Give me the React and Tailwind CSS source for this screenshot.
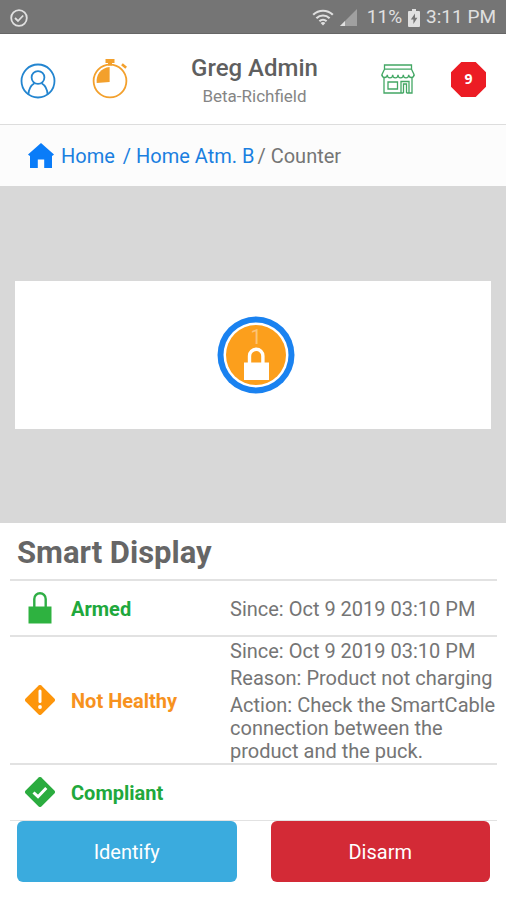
const statusColors = {
  good: 'text-[#20a83c]',
  warning: 'text-[#f7921e]',
}

const statuses = [
  { label: 'Armed', tone: 'good', Icon: ArmedIcon, details: ['Since: Oct 9 2019 03:10 PM'] },
  {
    label: 'Not Healthy',
    tone: 'warning',
    Icon: WarningIcon,
    details: [
      'Since: Oct 9 2019 03:10 PM',
      'Reason: Product not charging',
      'Action: Check the SmartCable connection between the product and the puck.',
    ],
  },
  { label: 'Compliant', tone: 'good', Icon: CompliantIcon, details: [] },
]

function StatusBar() {
  return (
    <div className="flex h-[34px] items-center justify-between border-b border-[#666] bg-[#757575] px-2.5 pt-0.5 text-[19px] text-[#e0e0e0]">
      <svg viewBox="0 0 18 18" className="size-[18px]" fill="none" stroke="currentColor" strokeWidth="1.8">
        <circle cx="9" cy="9" r="7.8" />
        <path d="M5 9l3 3 5.2-5.5" />
      </svg>
      <div className="flex items-center">
        <svg viewBox="0 0 22 17" className="mr-1.5 h-[17px] w-[22px]" fill="none" stroke="currentColor" strokeWidth="2.2">
          <path d="M1.2 5.8C6.8.4 15.2.4 20.8 5.8" />
          <path d="M4.4 9.2c3.8-3.6 9.4-3.6 13.2 0" />
          <path d="M7.4 12.3c2.1-1.9 5.1-1.9 7.2 0" />
          <path d="M11 16.5l-2.4-2.6c1.4-1.2 3.4-1.2 4.8 0z" fill="currentColor" stroke="none" />
        </svg>
        <svg viewBox="0 0 17 17" className="mr-2.5 size-[17px]" fill="currentColor">
          <path d="M17 0v17H0z" opacity=".4" />
          <path d="M5 12v5H0z" />
        </svg>
        <span>11%</span>
        <svg viewBox="0 0 12 18" className="mx-1.5 h-[18px] w-3">
          <path d="M4 0h4v2h3a1 1 0 0 1 1 1v14a1 1 0 0 1-1 1H1a1 1 0 0 1-1-1V3a1 1 0 0 1 1-1h3z" fill="currentColor" />
          <path d="M7 4.5L2.8 10.6h2.6V15l4-6.2H7z" fill="#757575" />
        </svg>
        <span>3:11 PM</span>
      </div>
    </div>
  )
}

function UserIcon() {
  return (
    <svg viewBox="0 0 36 36" className="size-9" fill="none" stroke="#2385d0" strokeWidth="1.8">
      <circle cx="18" cy="18" r="16.5" />
      <circle cx="18" cy="14.5" r="6.4" />
      <path d="M8.4 31.4c.4-6.2 3-9.4 6-11.2M27.6 31.4c-.4-6.2-3-9.4-6-11.2" />
    </svg>
  )
}

function TimerIcon() {
  return (
    <svg viewBox="0 0 36 40" className="h-10 w-9" fill="#f3a02c">
      <circle cx="18" cy="22" r="16.4" fill="none" stroke="#f3a02c" strokeWidth="1.8" />
      <path d="M13.5 0h9v4h-9zM16 4h4v2.5h-4zM30.8 4.2l4.2 3.6-1.7 2-4.2-3.6z" />
      <path d="M17.6 8v15L4.7 24C3.7 16 9 8.6 17.6 8z" />
    </svg>
  )
}

function StoreIcon() {
  return (
    <svg viewBox="0 0 34 30" className="h-[30px] w-[34px]" fill="none" stroke="#43a764" strokeWidth="1.3">
      <path d="M3.5 1h27v4.2h-27zM3.5 5.2L1 10.5v1.3M30.5 5.2l2.5 5.3v1.3" />
      <path d="M1 10.8c0 3.6 5.3 3.6 5.3 0 0 4.2 5.4 4.2 5.4 0 0 4.2 5.3 4.2 5.3 0 0 4.2 5.3 4.2 5.3 0 0 4.2 5.4 4.2 5.4 0 0 3.6 5.3 3.6 5.3 0" />
      <path d="M3 14v15h17V17.5h8V29h3V14M22.5 29V20h3v9M20 29h2.5M25.5 29H28" />
      <path d="M7 18h9.5v7H7z" />
    </svg>
  )
}

function HomeIcon() {
  return (
    <svg viewBox="0 0 26 25" className="h-[25px] w-[26px]" fill="#0a7cf8">
      <path d="M13 0l13 11.5-1.4 1.3H24V25h-7.8v-8.5H9.8V25H2V12.8h-.6L0 11.5z" />
    </svg>
  )
}

function ArmedIcon() {
  return (
    <svg viewBox="0 0 30 32" className="h-8 w-[30px]">
      <path d="M9.3 15V7a5.7 5.7 0 0 1 11.4 0v8" fill="none" stroke="#2fae45" strokeWidth="2.4" />
      <path d="M3.5 14.5h23v17h-23z" fill="#2eb240" />
    </svg>
  )
}

function WarningIcon() {
  return (
    <svg viewBox="0 0 30 30" className="size-[30px]">
      <path d="M13.6.6a2 2 0 0 1 2.8 0l13 13a2 2 0 0 1 0 2.8l-13 13a2 2 0 0 1-2.8 0l-13-13a2 2 0 0 1 0-2.8z" fill="#fd950b" />
      <path d="M15 6v10.5" stroke="#fff" strokeWidth="3" strokeLinecap="round" />
      <circle cx="15" cy="22" r="1.9" fill="#fff" />
    </svg>
  )
}

function CompliantIcon() {
  return (
    <svg viewBox="0 0 30 30" className="size-[30px]">
      <path d="M13.6.6a2 2 0 0 1 2.8 0l13 13a2 2 0 0 1 0 2.8l-13 13a2 2 0 0 1-2.8 0l-13-13a2 2 0 0 1 0-2.8z" fill="#2bac3f" />
      <path d="M8.5 15.500l4.500 4.200 8.300-8.700" fill="none" stroke="#fff" strokeWidth="3" />
    </svg>
  )
}

function Header() {
  return (
    <header className="flex h-[91px] items-center justify-between border-b border-[#ddd] px-5">
      <div className="flex items-center gap-9">
        <button aria-label="Profile" className="pt-1">
          <UserIcon />
        </button>
        <button aria-label="Timer">
          <TimerIcon />
        </button>
      </div>
      <div className="pt-1.5 text-center">
        <h1 className="text-2xl leading-7 font-medium text-[#5f5f5f]">Greg Admin</h1>
        <p className="text-[17px] leading-7 text-[#858585]">Beta-Richfield</p>
      </div>
      <div className="flex items-center gap-9">
        <button aria-label="Store">
          <StoreIcon />
        </button>
        <button aria-label="9 alerts" className="grid size-[35px] place-items-center">
          <svg viewBox="0 0 34 34" className="col-start-1 row-start-1 size-[35px]" fill="#ec1c24">
            <path d="M10 0h14l10 10v14L24 34H10L0 24V10z" />
          </svg>
          <span className="col-start-1 row-start-1 font-['Open_Sans',sans-serif] text-sm font-bold text-white">9</span>
        </button>
      </div>
    </header>
  )
}

function Breadcrumb() {
  return (
    <nav className="flex h-[61px] items-center bg-[#fcfcfc] pl-7 text-xl text-[#757575]">
      <a href="#home" className="flex items-center gap-[7px] text-[#1a7fe0]">
        <HomeIcon />
        Home
      </a>
      <a href="#atm" className="ml-2 text-[#1a7fe0]">/ Home Atm. B</a>
      <span className="ml-[3px]">/ Counter</span>
    </nav>
  )
}

function DisplayMap() {
  return (
    <main className="flex h-[337px] items-center bg-[#d8d8d8] px-[15px]">
      <div className="flex h-[148px] w-full items-center justify-center bg-white pl-1.5">
        <button aria-label="Display 1, armed" className="grid place-items-center">
          <svg viewBox="0 0 78 78" className="col-start-1 row-start-1 size-[78px]">
            <circle cx="39" cy="39" r="38.5" fill="#1a82f0" />
            <circle cx="39" cy="39" r="32.5" fill="#fff" />
            <circle cx="39" cy="39" r="30" fill="#fc9f1c" />
            <path d="M32.5 48V40a6.7 6.700 0 0 1 13.400 0v8" fill="none" stroke="#fff" strokeWidth="3.4" />
            <path d="M27 46.5h25V64H27z" fill="#fff" />
          </svg>
          <span className="col-start-1 row-start-1 mb-9 text-xl text-[#fdc477]">1</span>
        </button>
      </div>
    </main>
  )
}

function StatusTable() {
  return (
    <table className="w-full table-fixed text-left text-xl leading-[23px]">
      <tbody>
        {statuses.map(({ label, tone, Icon, details }) => (
          <tr key={label} className="h-14 border-t-2 border-b border-[#e2e2e2]">
            <td className="w-[61px] pl-[15px]">
              <Icon />
            </td>
            <th scope="row" className={`w-[159px] pt-0.5 font-bold ${statusColors[tone]}`}>{label}</th>
            <td className="text-[#757575]">
              <div className="flex flex-col gap-1 pt-[3px]">
                {details.map(line => (
                  <p key={line}>{line}</p>
                ))}
              </div>
            </td>
          </tr>
        ))}
      </tbody>
    </table>
  )
}

export default function App() {
  return (
    <div className="min-h-screen bg-white font-[Roboto,sans-serif]">
      <StatusBar />
      <Header />
      <Breadcrumb />
      <DisplayMap />
      <section className="pr-[9px] pl-2.5">
        <h2 className="px-[7px] pt-3.5 pb-2.5 text-[31px] leading-8 font-bold text-[#666]">Smart Display</h2>
        <StatusTable />
        <div className="grid grid-cols-2 gap-[34px] px-[7px] text-xl text-white">
          <button className="h-[61px] rounded-md bg-[#3aabde] pt-0.5">Identify</button>
          <button className="h-[61px] rounded-md bg-[#d32a36] pt-0.5">Disarm</button>
        </div>
      </section>
    </div>
  )
}
